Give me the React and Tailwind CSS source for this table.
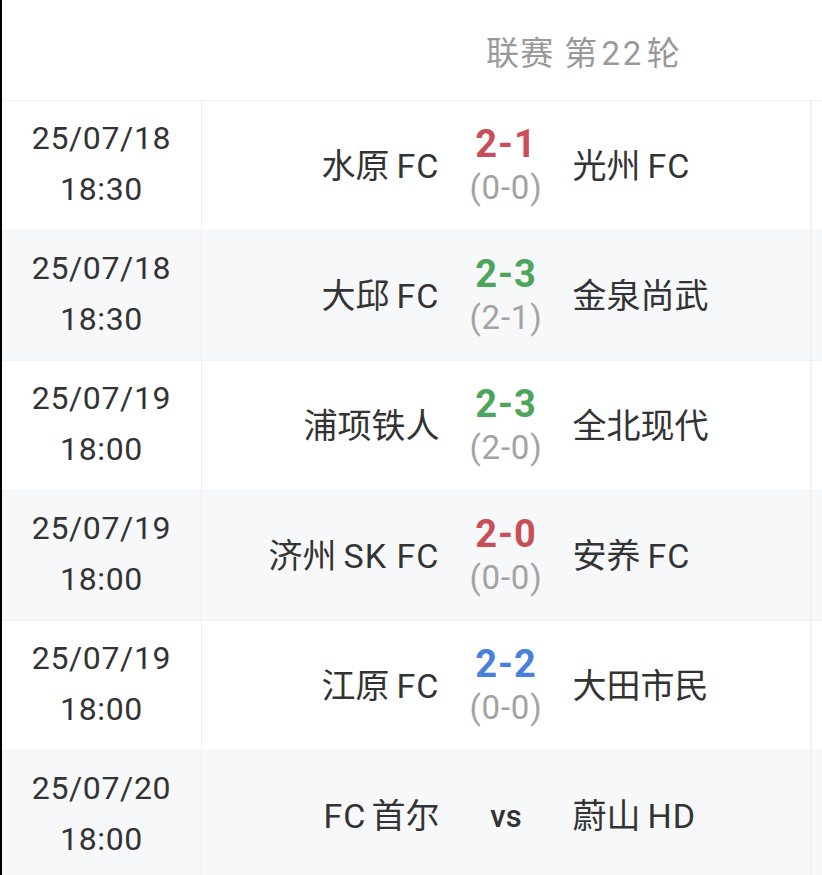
import React from 'react';

const matches = [
  { date: '25/07/18', time: '18:30', home: '水原FC', away: '光州FC', score: '2-1', ht: '(0-0)', color: 'text-[#c84f59]' },
  { date: '25/07/18', time: '18:30', home: '大邱FC', away: '金泉尚武', score: '2-3', ht: '(2-1)', color: 'text-[#4ba55a]' },
  { date: '25/07/19', time: '18:00', home: '浦项铁人', away: '全北现代', score: '2-3', ht: '(2-0)', color: 'text-[#4ba55a]' },
  { date: '25/07/19', time: '18:00', home: '济州SK FC', away: '安养FC', score: '2-0', ht: '(0-0)', color: 'text-[#c84f59]' },
  { date: '25/07/19', time: '18:00', home: '江原FC', away: '大田市民', score: '2-2', ht: '(0-0)', color: 'text-[#4a80dd]' },
  { date: '25/07/20', time: '18:00', home: 'FC首尔', away: '蔚山HD', score: null },
];

const font = "font-['Roboto','Noto_Sans_CJK_SC',sans-serif]";

// split mixed CJK / latin so the latin runs get the little gap the app shows
const TeamName = ({ name }) => {
  const parts = name.match(/[\u4e00-\u9fff]+|[^\u4e00-\u9fff]+/g) || [];
  return (
    <>
      {parts.map((p, i) => {
        const latin = !/[\u4e00-\u9fff]/.test(p);
        return (
          <span
            key={i}
            className={latin ? `tracking-[0.03em] ${i > 0 ? 'ml-[7px]' : ''} ${i < parts.length - 1 ? 'mr-[5px]' : ''}` : ''}
          >
            {p}
          </span>
        );
      })}
    </>
  );
};

const MatchRow = ({ match, index }) => {
  const bg = index % 2 === 0 ? 'bg-white' : 'bg-[#f7f8fa]';
  return (
    <div className={`flex h-[130px] border-t border-[#f1f2f4] ${bg}`}>
      {/* Date / Time */}
      <div className="w-[200px] flex flex-col items-center justify-center border-r border-[#eeeff1] text-[32px] leading-[51px] tracking-[0.02em] text-[#333] pb-1">
        <span>{match.date}</span>
        <span>{match.time}</span>
      </div>

      {/* Teams + Score */}
      <div className="flex-1 flex items-center border-r-2 border-[#f0f1f3]">
        <div className="flex-1 text-right text-[34px] text-[#333] pt-0.5">
          <TeamName name={match.home} />
        </div>
        <div className="w-[133px] flex flex-col items-center justify-center">
          {match.score ? (
            <>
              <span className={`text-[38px] font-bold leading-[44px] tracking-wide ${match.color}`}>{match.score}</span>
              <span className="text-[33px] leading-[44px] text-[#a3a3a3] tracking-wide">{match.ht}</span>
            </>
          ) : (
            <span className="text-[31px] font-medium text-[#333] pt-1">vs</span>
          )}
        </div>
        <div className="flex-1 text-left text-[34px] text-[#333] pt-0.5">
          <TeamName name={match.away} />
        </div>
      </div>
      <div className="w-[10px]" />
    </div>
  );
};

export default function App() {
  return (
    <div className={`w-[822px] h-[875px] overflow-hidden bg-white border-l-2 border-black ${font}`}>
      {/* Header */}
      <div className="h-[100px] flex items-center pl-[484px] pt-2">
        <span className="text-[33px] text-[#999] tracking-[0.04em]">
          联赛 第<span className="mx-[3px] tracking-[0.08em]">22</span>轮
        </span>
      </div>

      {matches.map((m, i) => (
        <MatchRow key={i} match={m} index={i} />
      ))}
    </div>
  );
}
